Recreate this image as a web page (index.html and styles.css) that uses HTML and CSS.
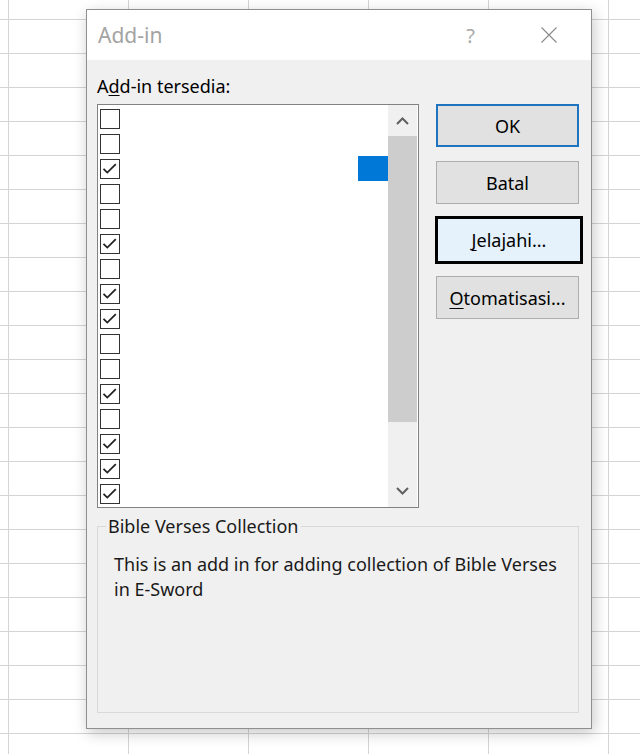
FILE: index.html
```html
<!DOCTYPE html>
<html>
<head>
<meta charset="utf-8">
<link rel="stylesheet" href="styles.css">
</head>
<body>
<div class="dialog">
  <div class="titlebar">
    <span class="title">Add-in</span>
    <span class="help">?</span>
    <svg class="close" width="16" height="16" viewBox="0 0 16 16"><path d="M0.5 0.5 L15.5 15.5 M15.5 0.5 L0.5 15.5" stroke="#8a8a8a" stroke-width="1.1" fill="none"/></svg>
  </div>
  <div class="body">
    <div class="label">A<u>d</u>d-in tersedia:</div>
    <div class="main">
      <div class="listbox">
        <div class="items">
          <div class="row"><span class="cb"></span></div>
          <div class="row"><span class="cb"></span></div>
          <div class="row"><span class="cb on"></span><span class="sel"></span></div>
          <div class="row"><span class="cb"></span></div>
          <div class="row"><span class="cb"></span></div>
          <div class="row"><span class="cb on"></span></div>
          <div class="row"><span class="cb"></span></div>
          <div class="row"><span class="cb on"></span></div>
          <div class="row"><span class="cb on"></span></div>
          <div class="row"><span class="cb"></span></div>
          <div class="row"><span class="cb"></span></div>
          <div class="row"><span class="cb on"></span></div>
          <div class="row"><span class="cb"></span></div>
          <div class="row"><span class="cb on"></span></div>
          <div class="row"><span class="cb on"></span></div>
          <div class="row"><span class="cb on"></span></div>
        </div>
        <div class="scrollbar">
          <div class="sb-btn"><svg width="13" height="8" viewBox="0 0 13 8"><path d="M1 7 L6.5 1.5 L12 7" stroke="#606060" stroke-width="2" fill="none"/></svg></div>
          <div class="thumb"></div>
          <div class="track"></div>
          <div class="sb-btn down"><svg width="13" height="8" viewBox="0 0 13 8"><path d="M1 1 L6.5 6.5 L12 1" stroke="#606060" stroke-width="2" fill="none"/></svg></div>
        </div>
      </div>
      <div class="buttons">
        <div class="btn ok">OK</div>
        <div class="btn batal">Batal</div>
        <div class="btn jelajahi"><u>J</u>elajahi...</div>
        <div class="btn otomatis"><u>O</u>tomatisasi...</div>
      </div>
    </div>
    <fieldset class="group">
      <legend>Bible Verses Collection</legend>
      <p class="desc">This is an add in for adding collection of Bible Verses in E-Sword</p>
    </fieldset>
  </div>
</div>
</body>
</html>
```
FILE: styles.css
```css
html, body {
  margin: 0;
  padding: 0;
}
body {
  width: 640px;
  height: 754px;
  overflow: hidden;
  background-color: #ffffff;
  background-image:
    linear-gradient(to right, #d4d4d4 1px, transparent 1px),
    linear-gradient(to bottom, #d4d4d4 1px, transparent 1px);
  background-size: 120px 34px;
  background-position: 8px 19px;
  font-family: "Noto Sans", "Open Sans", sans-serif;
  font-size: 18px;
  color: #000;
  padding-top: 9px;
  box-sizing: border-box;
}
.dialog {
  margin-left: 86px;
  width: 506px;
  height: 720px;
  box-sizing: border-box;
  border: 1px solid #8f8f8f;
  background: #f0f0f0;
  box-shadow: 2px 4px 14px rgba(0,0,0,0.22);
  display: flex;
  flex-direction: column;
}
.titlebar {
  height: 50px;
  background: #ffffff;
  display: flex;
  align-items: center;
  padding-left: 11px;
  flex: none;
}
.title {
  font-size: 21px;
  color: #a3a3a3;
  flex: 1;
}
.help {
  font-size: 20px;
  color: #a8a8a8;
  margin-right: 66px;
}
.close {
  margin-right: 34px;
}
.body {
  flex: 1;
  display: flex;
  flex-direction: column;
  padding: 14px 12px 15px 10px;
}
.label {
  line-height: 24px;
  height: 24px;
  margin-bottom: 6px;
}
.label u { text-underline-offset: 2px; }
.main {
  display: flex;
  align-items: flex-start;
}
.listbox {
  width: 322px;
  height: 404px;
  box-sizing: border-box;
  border: 1px solid #828282;
  background: #fff;
  display: flex;
}
.items {
  flex: 1;
  padding-top: 1px;
}
.row {
  height: 25px;
  display: flex;
  align-items: center;
}
.cb {
  width: 20px;
  height: 20px;
  box-sizing: border-box;
  border: 1px solid #333;
  margin-left: 2px;
  background: #fff;
}
.cb.on {
  background-image: url("data:image/svg+xml;utf8,<svg xmlns='http://www.w3.org/2000/svg' width='18' height='18' viewBox='0 0 18 18'><path d='M2.5 8.8 L6.3 12.6 L14.8 4.1' stroke='%23222' stroke-width='1.8' fill='none'/></svg>");
}
.sel {
  margin-left: auto;
  width: 30px;
  height: 25px;
  background: #0078d7;
}
.scrollbar {
  width: 29px;
  margin-right: 1px;
  background: #f0f0f0;
  display: flex;
  flex-direction: column;
}
.sb-btn {
  height: 31px;
  display: flex;
  align-items: center;
  justify-content: center;
  flex: none;
}
.sb-btn.down {
  height: 32px;
}
.thumb {
  height: 286px;
  background: #cdcdcd;
  flex: none;
}
.track {
  flex: 1;
}
.buttons {
  margin-left: 17px;
  display: flex;
  flex-direction: column;
  width: 143px;
}
.btn {
  height: 43px;
  box-sizing: border-box;
  border: 1px solid #adadad;
  background: #e1e1e1;
  display: flex;
  align-items: center;
  justify-content: center;
  line-height: 1;
}
.btn u { text-underline-offset: 3px; }
.ok {
  border: 2px solid #1f74bf;
}
.batal {
  margin-top: 14px;
}
.jelajahi {
  margin-top: 12px;
  margin-left: -1px;
  width: 148px;
  height: 48px;
  border: 3px solid #000;
  background: #e5f1fb;
}
.otomatis {
  margin-top: 12px;
}
.group {
  margin: 6px 0 0 0;
  width: 482px;
  box-sizing: border-box;
  flex: 1;
  border: 1px solid #d9d9d9;
  padding: 0;
  min-width: 0;
}
.group legend {
  margin-left: 8px;
  padding: 0 2px;
  line-height: 24px;
  color: #1a1a1a;
}
.desc {
  margin: 14px 0 0 16px;
  line-height: 25px;
  width: 460px;
  color: #1a1a1a;
}
```
